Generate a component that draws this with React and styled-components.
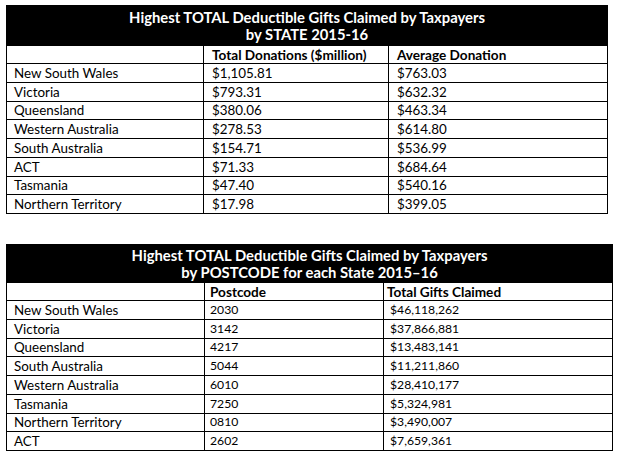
import React from "react";
import styled, { createGlobalStyle } from "styled-components";

const GlobalStyle = createGlobalStyle`
  html, body {
    margin: 0;
    padding: 0;
    background: #ffffff;
  }
  body {
    font-family: Lato, "Open Sans", "Liberation Sans", sans-serif;
    color: #000;
  }
`;

const stateRows = [
  ["New South Wales", "$1,105.81", "$763.03"],
  ["Victoria", "$793.31", "$632.32"],
  ["Queensland", "$380.06", "$463.34"],
  ["Western Australia", "$278.53", "$614.80"],
  ["South Australia", "$154.71", "$536.99"],
  ["ACT", "$71.33", "$684.64"],
  ["Tasmania", "$47.40", "$540.16"],
  ["Northern Territory", "$17.98", "$399.05"],
];

const postcodeRows = [
  ["New South Wales", "2030", "$46,118,262"],
  ["Victoria", "3142", "$37,866,881"],
  ["Queensland", "4217", "$13,483,141"],
  ["South Australia", "5044", "$11,211,860"],
  ["Western Australia", "6010", "$28,410,177"],
  ["Tasmania", "7250", "$5,324,981"],
  ["Northern Territory", "0810", "$3,490,007"],
  ["ACT", "2602", "$7,659,361"],
];

const Page = styled.div`
  display: flex;
  flex-direction: column;
  align-items: flex-start;
  gap: 30px;
  padding: 5px 0 0 6px;
`;

const Table = styled.table`
  border-collapse: collapse;
  table-layout: fixed;
  width: ${(p) => p.$width}px;
`;

const TitleCell = styled.th`
  background: #000;
  color: #fff;
  font-weight: 700;
  font-size: 14.8px;
  line-height: ${(p) => p.$line}px;
  height: ${(p) => p.$height}px;
  padding: 0;
  text-align: center;
  vertical-align: middle;
  border: 1px solid #000;
`;

const HeadCell = styled.th`
  font-weight: 700;
  font-size: 13.6px;
  text-align: left;
  height: 17px;
  line-height: 16px;
  padding: 0 0 0 ${(p) => p.$pad || 7}px;
  border: 1px solid #000;
  white-space: nowrap;
  vertical-align: middle;
`;

const Cell = styled.td`
  font-size: ${(p) => p.$size || 13.4}px;
  height: 17.75px;
  line-height: 16px;
  padding: 0 0 0 ${(p) => p.$pad || 7}px;
  border: 1px solid #000;
  white-space: nowrap;
  vertical-align: middle;
`;

const DataTable = ({ width, cols, titleHeight, titleLine, title, heads, rows, valueSize, pads }) => (
  <Table $width={width}>
    <colgroup>
      {cols.map((c, i) => (
        <col key={i} style={{ width: c }} />
      ))}
    </colgroup>
    <thead>
      <tr>
        <TitleCell colSpan={3} $height={titleHeight} $line={titleLine}>
          {title[0]}
          <br />
          {title[1]}
        </TitleCell>
      </tr>
      <tr>
        {heads.map((h, i) => (
          <HeadCell key={i} $pad={pads[i]}>
            {h}
          </HeadCell>
        ))}
      </tr>
    </thead>
    <tbody>
      {rows.map((r) => (
        <tr key={r[0]}>
          <Cell $pad={7}>{r[0]}</Cell>
          <Cell $pad={pads[1]} $size={valueSize}>
            {r[1]}
          </Cell>
          <Cell $pad={pads[2] + (valueSize ? 3 : 0)} $size={valueSize}>
            {r[2]}
          </Cell>
        </tr>
      ))}
    </tbody>
  </Table>
);

export default function App() {
  return (
    <>
      <GlobalStyle />
      <Page>
        <DataTable
          width={601}
          cols={[197, 185, 219]}
          titleHeight={39}
          titleLine={17}
          title={["Highest TOTAL Deductible Gifts Claimed by Taxpayers", "by STATE 2015-16"]}
          heads={["", "Total Donations ($million)", "Average Donation"]}
          rows={stateRows}
          pads={[7, 8, 8]}
        />
        <DataTable
          width={606}
          cols={[198, 179, 229]}
          titleHeight={37}
          titleLine={17}
          title={[
            "Highest TOTAL Deductible Gifts Claimed by Taxpayers",
            "by POSTCODE for each State 2015\u201316",
          ]}
          heads={["", "Postcode", "Total Gifts Claimed"]}
          rows={postcodeRows}
          valueSize={12.2}
          pads={[7, 5, 3]}
        />
      </Page>
    </>
  );
}
